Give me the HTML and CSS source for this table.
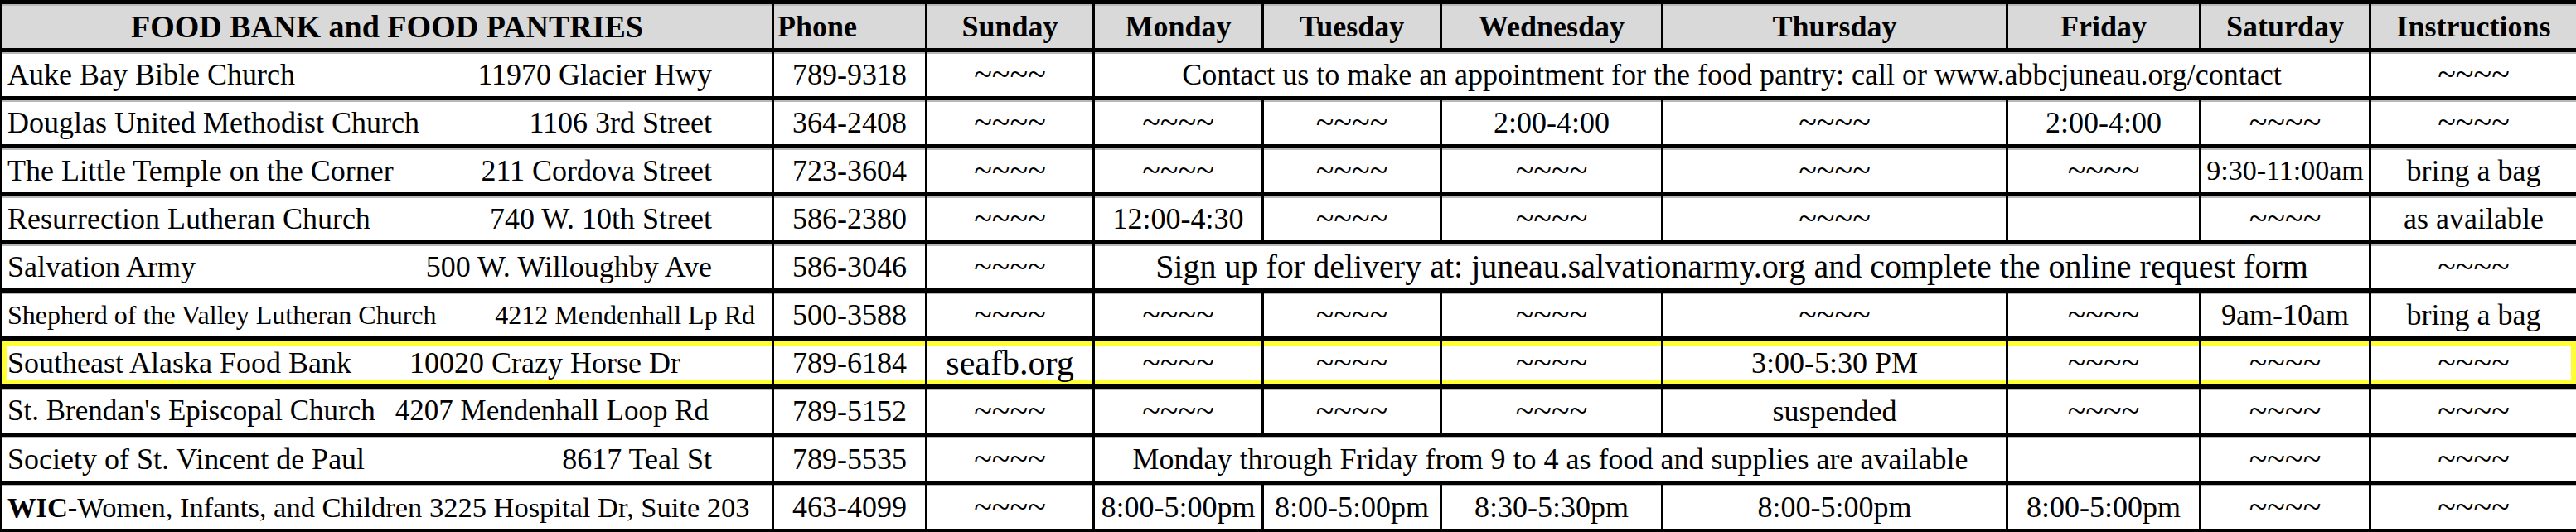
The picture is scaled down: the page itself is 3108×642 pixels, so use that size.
FILE: index.html
```html
<!DOCTYPE html>
<html>
<head>
<meta charset="utf-8">
<title>Food Bank and Food Pantries</title>
<link rel="stylesheet" href="styles.css">
</head>
<body>
<table class="sched">
  <colgroup>
    <col class="c-name"><col class="c-phone"><col class="c-sun"><col class="c-mon"><col class="c-tue">
    <col class="c-wed"><col class="c-thu"><col class="c-fri"><col class="c-sat"><col class="c-ins">
  </colgroup>
  <thead>
    <tr>
      <th class="title">FOOD BANK and FOOD PANTRIES</th>
      <th class="ph">Phone</th>
      <th>Sunday</th>
      <th>Monday</th>
      <th>Tuesday</th>
      <th>Wednesday</th>
      <th>Thursday</th>
      <th>Friday</th>
      <th>Saturday</th>
      <th>Instructions</th>
    </tr>
  </thead>
  <tbody>
    <tr>
      <td class="org"><div class="nm"><span>Auke Bay Bible Church</span><span>11970 Glacier Hwy</span></div></td>
      <td>789-9318</td>
      <td class="t">~~~~</td>
      <td colspan="6">Contact us to make an appointment for the food pantry: call or www.abbcjuneau.org/contact</td>
      <td class="t">~~~~</td>
    </tr>
    <tr>
      <td class="org"><div class="nm"><span>Douglas United Methodist Church</span><span>1106 3rd Street</span></div></td>
      <td>364-2408</td>
      <td class="t">~~~~</td>
      <td class="t">~~~~</td>
      <td class="t">~~~~</td>
      <td class="hi">2:00-4:00</td>
      <td class="t">~~~~</td>
      <td class="hi">2:00-4:00</td>
      <td class="t">~~~~</td>
      <td class="t">~~~~</td>
    </tr>
    <tr>
      <td class="org"><div class="nm"><span>The Little Temple on the Corner</span><span>211 Cordova Street</span></div></td>
      <td>723-3604</td>
      <td class="t">~~~~</td>
      <td class="t">~~~~</td>
      <td class="t">~~~~</td>
      <td class="t">~~~~</td>
      <td class="t">~~~~</td>
      <td class="t">~~~~</td>
      <td class="tight">9:30-11:00am</td>
      <td>bring a bag</td>
    </tr>
    <tr>
      <td class="org"><div class="nm"><span>Resurrection Lutheran Church</span><span>740 W. 10th Street</span></div></td>
      <td>586-2380</td>
      <td class="t top">~~~~</td>
      <td class="lo">12:00-4:30</td>
      <td class="t">~~~~</td>
      <td class="t">~~~~</td>
      <td class="t">~~~~</td>
      <td></td>
      <td class="t">~~~~</td>
      <td>as available</td>
    </tr>
    <tr>
      <td class="org"><div class="nm"><span>Salvation Army</span><span>500 W. Willoughby Ave</span></div></td>
      <td>586-3046</td>
      <td class="t top">~~~~</td>
      <td colspan="6" class="big">Sign up for delivery at: juneau.salvationarmy.org and complete the online request form</td>
      <td class="t">~~~~</td>
    </tr>
    <tr>
      <td class="org small"><div class="nm"><span>Shepherd of the Valley Lutheran Church</span><span>4212 Mendenhall Lp Rd</span></div></td>
      <td>500-3588</td>
      <td class="t top">~~~~</td>
      <td class="t">~~~~</td>
      <td class="t">~~~~</td>
      <td class="t">~~~~</td>
      <td class="t">~~~~</td>
      <td class="t">~~~~</td>
      <td>9am-10am</td>
      <td>bring a bag</td>
    </tr>
    <tr class="mark">
      <td class="org"><div class="nm sea"><span>Southeast Alaska Food Bank</span><span>10020 Crazy Horse Dr</span></div></td>
      <td>789-6184</td>
      <td class="big sea-link">seafb.org</td>
      <td class="t">~~~~</td>
      <td class="t top">~~~~</td>
      <td class="t">~~~~</td>
      <td class="hi">3:00-5:30 PM</td>
      <td class="t">~~~~</td>
      <td class="t">~~~~</td>
      <td class="t">~~~~</td>
    </tr>
    <tr>
      <td class="org"><div class="nm brendan"><span>St. Brendan's Episcopal Church</span><span>4207 Mendenhall Loop Rd</span></div></td>
      <td>789-5152</td>
      <td class="t">~~~~</td>
      <td class="t top">~~~~</td>
      <td class="t lo">~~~~</td>
      <td class="t lo">~~~~</td>
      <td class="lo">suspended</td>
      <td class="t lo">~~~~</td>
      <td class="t lo">~~~~</td>
      <td class="t">~~~~</td>
    </tr>
    <tr>
      <td class="org"><div class="nm"><span>Society of St. Vincent de Paul</span><span>8617 Teal St</span></div></td>
      <td>789-5535</td>
      <td class="t">~~~~</td>
      <td colspan="4">Monday through Friday from 9 to 4 as food and supplies are available</td>
      <td></td>
      <td class="t lo">~~~~</td>
      <td class="t top">~~~~</td>
    </tr>
    <tr>
      <td class="org"><div class="wic"><b>WIC-</b>Women, Infants, and Children 3225 Hospital Dr, Suite 203</div></td>
      <td>463-4099</td>
      <td class="t">~~~~</td>
      <td class="lo">8:00-5:00pm</td>
      <td class="lo">8:00-5:00pm</td>
      <td class="lo">8:30-5:30pm</td>
      <td class="lo">8:00-5:00pm</td>
      <td class="lo">8:00-5:00pm</td>
      <td class="t top">~~~~</td>
      <td class="t top">~~~~</td>
    </tr>
  </tbody>
</table>
</body>
</html>
```

FILE: styles.css
```css
html, body {
  margin: 0;
  padding: 0;
  background: #ffffff;
}

.sched {
  width: 3108px;
  table-layout: fixed;
  border-collapse: collapse;
  font-family: "Liberation Serif", "Times New Roman", serif;
  font-size: 36px;
  color: #000;
}

.c-name { width: 931px; }
.c-phone { width: 185px; }
.c-sun { width: 202px; }
.c-mon { width: 204px; }
.c-tue { width: 215px; }
.c-wed { width: 267px; }
.c-thu { width: 416px; }
.c-fri { width: 233px; }
.c-sat { width: 205px; }
.c-ins { width: 250px; }

.sched tr {
  height: 58px;
}

.sched th,
.sched td {
  height: 50px;
  padding: 0 2px;
  border-top: 5px solid #000;
  border-bottom: 5px solid #000;
  border-left: 3px solid #000;
  border-right: 3px solid #000;
  text-align: center;
  vertical-align: middle;
  white-space: nowrap;
  overflow: hidden;
  line-height: 40px;
  box-shadow: inset 0 2px 0 #b8b8b8;
}

.sched th {
  background: #d9d9d9;
  font-weight: bold;
  font-size: 36px;
}

.sched th.title {
  font-size: 38px;
}

.sched th.ph {
  text-align: left;
  padding-left: 4px;
}

.sched td.org {
  text-align: left;
  padding: 0 0 0 6px;
}

.nm {
  display: flex;
  justify-content: space-between;
  padding-right: 72px;
}

.nm.sea {
  padding-right: 110px;
}

.nm.brendan {
  padding-right: 76px;
  font-size: 35px;
}

.org.small {
  font-size: 32px;
}

.org.small .nm {
  padding-right: 20px;
}

.wic {
  white-space: nowrap;
  font-size: 34.5px;
}

.t {
  font-size: 40px;
}

.tight {
  font-size: 34px;
}

.top {
  vertical-align: top;
  padding-top: 2px;
}

.lo {
  vertical-align: bottom;
  padding-bottom: 2px;
}

.hi {
  vertical-align: top;
  padding-top: 6px;
}

.big {
  font-size: 40px;
}

.sea-link {
  font-size: 42px;
}

.mark td {
  box-shadow: inset 0 6px 0 #ffff33, inset 0 -6px 0 #ffff33;
}

.mark td:first-child {
  box-shadow: inset 0 6px 0 #ffff33, inset 0 -6px 0 #ffff33, inset 6px 0 0 #ffff33;
}

.mark td:last-child {
  box-shadow: inset 0 6px 0 #ffff33, inset 0 -6px 0 #ffff33, inset -6px 0 0 #ffff33;
}
```
